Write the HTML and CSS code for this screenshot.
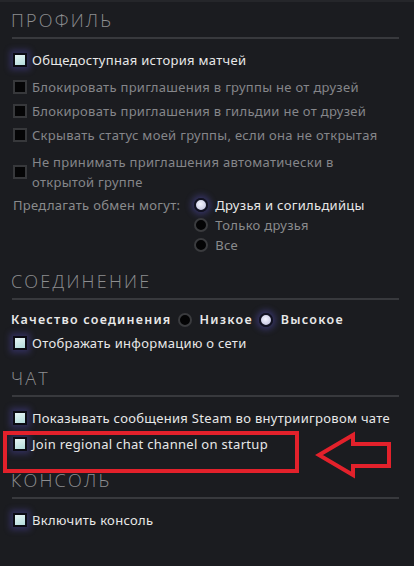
FILE: index.html
```html
<!DOCTYPE html>
<html lang="ru">
<head>
<meta charset="utf-8">
<link rel="stylesheet" href="styles.css">
</head>
<body>
<div class="page">
  <section class="sec sec-profile">
    <h2 class="title">ПРОФИЛЬ</h2>
    <div class="divider"></div>
    <div class="row row-first"><span class="cb on"></span><span class="lbl on">Общедоступная история матчей</span></div>
    <div class="row"><span class="cb"></span><span class="lbl">Блокировать приглашения в группы не от друзей</span></div>
    <div class="row"><span class="cb"></span><span class="lbl">Блокировать приглашения в гильдии не от друзей</span></div>
    <div class="row"><span class="cb"></span><span class="lbl">Скрывать статус моей группы, если она не открытая</span></div>
    <div class="row row-two"><span class="cb"></span><span class="lbl">Не принимать приглашения автоматически в<br>открытой группе</span></div>
    <div class="trade">
      <span class="trade-lbl">Предлагать обмен могут:</span>
      <div class="opts">
        <div class="opt"><span class="rb on"></span><span class="on-txt">Друзья и согильдийцы</span></div>
        <div class="opt"><span class="rb"></span><span>Только друзья</span></div>
        <div class="opt"><span class="rb"></span><span>Все</span></div>
      </div>
    </div>
  </section>

  <section class="sec sec-conn">
    <h2 class="title">СОЕДИНЕНИЕ</h2>
    <div class="divider"></div>
    <div class="quality">
      <span class="q-lbl">Качество соединения</span>
      <span class="rb q-rb"></span><span class="q-opt">Низкое</span>
      <span class="rb on q-rb"></span><span class="q-opt">Высокое</span>
    </div>
    <div class="row"><span class="cb on"></span><span class="lbl on">Отображать информацию о сети</span></div>
  </section>

  <section class="sec sec-chat">
    <h2 class="title">ЧАТ</h2>
    <div class="divider"></div>
    <div class="row"><span class="cb on"></span><span class="lbl on">Показывать сообщения Steam во внутриигровом чате</span></div>
    <div class="row row-join">
      <span class="cb on"></span><span class="lbl on">Join regional chat channel on startup</span>
      <span class="hl-box"></span>
      <svg class="hl-arrow" width="80" height="48" viewBox="0 0 80 48"><polygon points="4,24 38,4 38,13 74,13 74,35 38,35 38,44" fill="none" stroke="#e3212b" stroke-width="4" stroke-linejoin="miter"/></svg>
    </div>
  </section>

  <section class="sec sec-console">
    <h2 class="title">КОНСОЛЬ</h2>
    <div class="divider"></div>
    <div class="row"><span class="cb on"></span><span class="lbl on">Включить консоль</span></div>
  </section>
</div>
</body>
</html>
```

FILE: styles.css
```css
html, body {
  margin: 0;
  padding: 0;
  background: #1b1c20;
}
body {
  width: 414px;
  height: 566px;
  overflow: hidden;
  font-family: "Noto Sans", "DejaVu Sans", sans-serif;
  font-size: 13px;
  color: #8a8b8d;
}
.page {
  border-top: 2px solid #25262a;
  padding: 0 15px 0 11px;
}
.sec {
  display: flex;
  flex-direction: column;
}
.title {
  margin: 0;
  font-family: "Open Sans", "Noto Sans", sans-serif;
  font-weight: 300;
  font-size: 18px;
  line-height: 22px;
  letter-spacing: 2.2px;
  color: #8d8e90;
}
.sec-profile .title { margin-top: 7px; }
.sec-conn .title { margin-top: 15px; }
.sec-chat .title { margin-top: 12px; }
.sec-console .title { margin-top: 13px; }
.divider {
  height: 2px;
  background: #38393d;
  margin: 6px 0 9px 1px;
}
.row {
  display: flex;
  align-items: center;
  gap: 5px;
  padding: 2px 0 2px 2px;
  line-height: 20px;
}
.row-first { margin-bottom: 3px; }
.row-two { margin-top: 3px; }
.row-join { margin-top: 2px; position: relative; }
.lbl { color: #85868a; letter-spacing: 0.3px; }
.lbl.on { color: #e8e8e8; }
.cb {
  flex: none;
  width: 10px;
  height: 10px;
  border: 2px solid #37383b;
  background: #050506;
}
.cb.on {
  border-color: #0c0c14;
  background: linear-gradient(160deg, #e6f4f4, #b4dcdc);
  box-shadow: 0 0 6px 3px rgba(92, 84, 200, 0.35);
}
.rb {
  flex: none;
  width: 10px;
  height: 10px;
  border-radius: 50%;
  border: 2px solid #3a3b3e;
  background: #040405;
}
.rb.on {
  border-color: #111122;
  background: radial-gradient(circle at 45% 40%, #f4f4ff, #b8b8d8);
  box-shadow: 0 0 6px 3px rgba(92, 84, 200, 0.4);
}
.trade {
  display: flex;
  align-items: flex-start;
  gap: 14px;
  margin-top: 1px;
  padding-left: 2px;
  line-height: 20px;
  letter-spacing: 0.3px;
}
.opts { display: flex; flex-direction: column; }
.opt { display: flex; align-items: center; gap: 7px; }
.on-txt { color: #e8e8e8; }
.quality {
  display: flex;
  align-items: center;
  line-height: 18px;
  padding: 2px 0;
  color: #e8e8e8;
  font-weight: 600;
  font-size: 12.5px;
  letter-spacing: 1.25px;
}
.q-rb { margin: 0 8px 0 6px; }
.hl-box {
  position: absolute;
  left: -8px;
  top: -1px;
  width: 288px;
  height: 34px;
  border: 4px solid #e3212b;
}
.hl-arrow {
  position: absolute;
  left: 304px;
  top: -1px;
}
```
